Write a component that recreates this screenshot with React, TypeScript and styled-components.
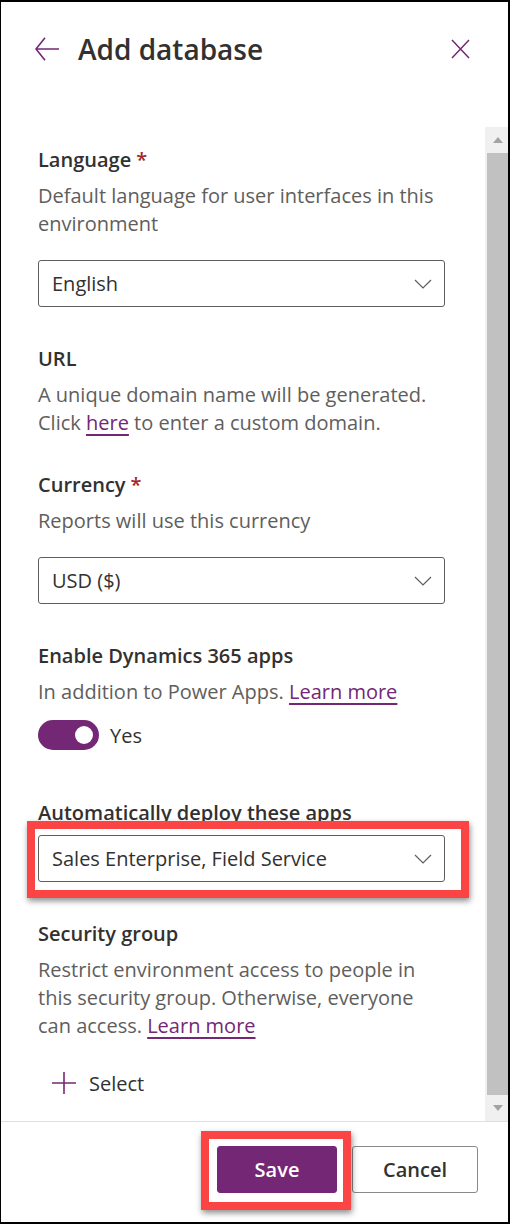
import React from "react";
import styled, { createGlobalStyle } from "styled-components";

const FONT = `"Segoe UI", "Open Sans", "Noto Sans", sans-serif`;
const PURPLE = "#742774";
const TEXT = "#323130";
const SUB = "#605e5c";
const RED = "#fb4444";

const Global = createGlobalStyle`
  html, body { margin: 0; padding: 0; background: #fff; }
  body { font-family: ${FONT}; }
  * { box-sizing: border-box; }
`;

const Panel = styled.div`
  width: 510px;
  height: 1224px;
  border: 2px solid #000;
  border-left-width: 1px;
  display: flex;
  flex-direction: column;
  background: #fff;
  font-family: ${FONT};
  color: ${TEXT};
  overflow: hidden;
`;

const Header = styled.header`
  height: 125px;
  flex: none;
  display: flex;
  align-items: flex-start;
  padding: 32px 38px 0 34px;
`;

const IconButton = styled.button`
  border: none;
  background: none;
  padding: 0;
  margin: 0;
  display: flex;
  align-items: center;
  justify-content: center;
  height: 30px;
  cursor: pointer;
`;

const Title = styled.h1`
  margin: 0 0 0 19px;
  flex: 1;
  font-size: 28px;
  line-height: 30px;
  font-weight: 600;
  color: ${TEXT};
`;

const Body = styled.div`
  flex: 1;
  display: flex;
  min-height: 0;
`;

const Content = styled.div`
  flex: 1;
  padding: 19px 38px 0 37px;
  overflow: hidden;
`;

const Section = styled.section<{ $top?: number }>`
  margin-top: ${(p) => p.$top ?? 0}px;
`;

const Label = styled.div`
  font-size: 20px;
  line-height: 28px;
  font-weight: 600;
  color: ${TEXT};
`;

const Required = styled.span`
  color: #a4262c;
  margin-left: 5px;
`;

const Desc = styled.p`
  margin: 8px 0 0;
  font-size: 20px;
  line-height: 28px;
  color: ${SUB};
  width: 407px;
`;

const Link = styled.a`
  color: ${PURPLE};
  text-decoration: underline;
  text-decoration-thickness: 2px;
  text-underline-offset: 4px;
  cursor: pointer;
`;

const Highlight = styled.div<{ $t: number; $r: number; $b: number; $l: number }>`
  position: relative;
  &::after {
    content: "";
    position: absolute;
    top: -${(p) => p.$t}px;
    right: -${(p) => p.$r}px;
    bottom: -${(p) => p.$b}px;
    left: -${(p) => p.$l}px;
    border: 8px solid ${RED};
    box-shadow: 1px 3px 6px rgba(0, 0, 0, 0.45);
    pointer-events: none;
  }
`;

const Dropdown = styled.div<{ $top?: number }>`
  margin-top: ${(p) => p.$top ?? 22}px;
  width: 407px;
  height: 47px;
  border: 1px solid #605e5c;
  border-radius: 3px;
  display: flex;
  align-items: center;
  justify-content: space-between;
  padding: 0 12px 0 13px;
  font-size: 20px;
  color: ${TEXT};
`;

const ToggleRow = styled.div`
  margin-top: 14px;
  display: flex;
  align-items: center;
  gap: 11px;
  height: 30px;
  font-size: 20px;
  color: ${TEXT};
`;

const Track = styled.div<{ $on: boolean }>`
  width: 61px;
  height: 30px;
  border-radius: 15px;
  background: ${(p) => (p.$on ? PURPLE : "#fff")};
  display: flex;
  align-items: center;
  justify-content: ${(p) => (p.$on ? "flex-end" : "flex-start")};
  padding: 0 6px;
`;

const Knob = styled.div`
  width: 18px;
  height: 18px;
  border-radius: 50%;
  background: #fff;
`;

const SelectRow = styled.div`
  margin-top: 29px;
  display: flex;
  align-items: center;
  gap: 13px;
  padding-left: 14px;
  height: 28px;
  font-size: 20px;
  color: ${TEXT};
`;

const Scrollbar = styled.div`
  width: 23px;
  flex: none;
  background: #f0f0f0;
  display: flex;
  flex-direction: column;
  align-items: stretch;
`;

const ScrollArrow = styled.div`
  height: 26px;
  display: flex;
  align-items: center;
  justify-content: center;
  padding-left: 2px;
`;

const Thumb = styled.div`
  flex: 1;
  margin-left: 2px;
  background: #c1c1c1;
`;

const Footer = styled.footer`
  height: 101px;
  flex: none;
  border-top: 1px solid #e1dfdd;
  display: flex;
  justify-content: flex-end;
  align-items: flex-start;
  padding: 24px 30px 0 0;
  gap: 15px;
`;

const Button = styled.button<{ $primary?: boolean; $w: number }>`
  width: ${(p) => p.$w}px;
  height: 47px;
  border-radius: 3px;
  font-family: ${FONT};
  font-size: 20px;
  font-weight: 600;
  cursor: pointer;
  border: 1px solid ${(p) => (p.$primary ? PURPLE : "#8a8886")};
  background: ${(p) => (p.$primary ? PURPLE : "#fff")};
  color: ${(p) => (p.$primary ? "#fff" : TEXT)};
`;

const Chevron = () => (
  <svg width="18" height="10" viewBox="0 0 18 10">
    <path d="M1 1 L9 9 L17 1" fill="none" stroke="#605e5c" strokeWidth="1.2" />
  </svg>
);

const BackArrow = () => (
  <svg width="24" height="24" viewBox="0 0 24 24">
    <path d="M10 0.8 L1 12 L10 23.2 M1 12 H24" fill="none" stroke={PURPLE} strokeWidth="1.6" />
  </svg>
);

const CloseIcon = () => (
  <svg width="19" height="20" viewBox="0 0 19 20">
    <path d="M1 1 L18 19 M18 1 L1 19" fill="none" stroke={PURPLE} strokeWidth="1.5" />
  </svg>
);

const PlusIcon = () => (
  <svg width="24" height="24" viewBox="0 0 24 24">
    <path d="M12 1 V23 M0 12 H24" fill="none" stroke={PURPLE} strokeWidth="1.6" />
  </svg>
);

const Tri = ({ up }: { up?: boolean }) => (
  <svg width="10" height="6" viewBox="0 0 10 6">
    <path d={up ? "M0 6 L5 0 L10 6 Z" : "M0 0 L5 6 L10 0 Z"} fill="#a3a3a3" />
  </svg>
);

export default function App() {
  return (
    <>
      <Global />
      <Panel>
        <Header>
          <IconButton aria-label="Back">
            <BackArrow />
          </IconButton>
          <Title>Add database</Title>
          <IconButton aria-label="Close">
            <CloseIcon />
          </IconButton>
        </Header>
        <Body>
          <Content>
            <Section>
              <Label>
                Language<Required>*</Required>
              </Label>
              <Desc>Default language for user interfaces in this environment</Desc>
              <Dropdown>
                English
                <Chevron />
              </Dropdown>
            </Section>
            <Section $top={38}>
              <Label>URL</Label>
              <Desc>
                A unique domain name will be generated. Click <Link>here</Link> to enter a custom
                domain.
              </Desc>
            </Section>
            <Section $top={34}>
              <Label>
                Currency<Required>*</Required>
              </Label>
              <Desc>Reports will use this currency</Desc>
              <Dropdown>
                USD ($)
                <Chevron />
              </Dropdown>
            </Section>
            <Section $top={38}>
              <Label>Enable Dynamics 365 apps</Label>
              <Desc>
                In addition to Power Apps. <Link>Learn more</Link>
              </Desc>
              <ToggleRow>
                <Track $on>
                  <Knob />
                </Track>
                Yes
              </ToggleRow>
            </Section>
            <Section $top={49}>
              <Label>Automatically deploy these apps</Label>
              <Highlight $t={14} $r={22} $b={16} $l={11}>
                <Dropdown $top={8}>
                  Sales Enterprise, Field Service
                  <Chevron />
                </Dropdown>
              </Highlight>
            </Section>
            <Section $top={38}>
              <Label>Security group</Label>
              <Desc>
                Restrict environment access to people in this security group. Otherwise, everyone
                can access. <Link>Learn more</Link>
              </Desc>
              <SelectRow>
                <PlusIcon />
                Select
              </SelectRow>
            </Section>
          </Content>
          <Scrollbar>
            <ScrollArrow>
              <Tri up />
            </ScrollArrow>
            <Thumb />
            <ScrollArrow>
              <Tri />
            </ScrollArrow>
          </Scrollbar>
        </Body>
        <Footer>
          <Highlight $t={15} $r={14} $b={17} $l={16}>
            <Button $primary $w={120}>
              Save
            </Button>
          </Highlight>
          <Button $w={126}>Cancel</Button>
        </Footer>
      </Panel>
    </>
  );
}
